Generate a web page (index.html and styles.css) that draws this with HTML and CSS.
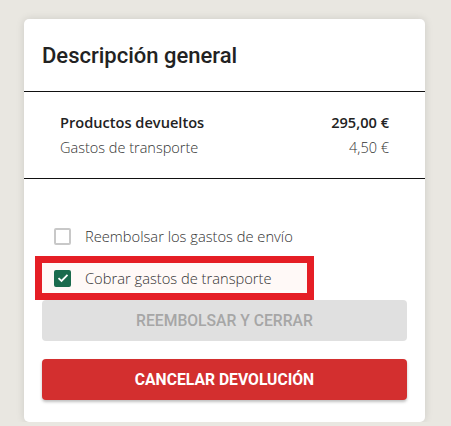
FILE: index.html
```html
<!DOCTYPE html>
<html lang="es">
<head>
    <meta charset="UTF-8">
    <meta name="viewport" content="width=device-width, initial-scale=1.0">
    <title>Descripción general</title>
    <link rel="stylesheet" href="styles.css">
</head>
<body>
    <div class="card">
        <div class="card-header">
            <h2>Descripción general</h2>
        </div>

        <div class="summary">
            <div class="summary-row total">
                <span>Productos devueltos</span>
                <span>295,00 €</span>
            </div>
            <div class="summary-row">
                <span>Gastos de transporte</span>
                <span>4,50 €</span>
            </div>
        </div>

        <div class="actions">
            <label class="check-row">
                <span class="box"></span>
                <span>Reembolsar los gastos de envío</span>
            </label>
            <label class="check-row highlight">
                <span class="box checked">
                    <svg width="12" height="10" viewBox="0 0 12 10"><path d="M1.5 5.2 L4.5 8 L10.5 1.8" fill="none" stroke="#fff" stroke-width="1.8"/></svg>
                </span>
                <span>Cobrar gastos de transporte</span>
            </label>

            <button class="btn btn-disabled" disabled>Reembolsar y cerrar</button>
            <button class="btn btn-danger">Cancelar devolución</button>
        </div>
    </div>
</body>
</html>
```

FILE: styles.css
```css
body {
    margin: 0;
    padding: 19px 0 0 24px;
    background-color: #e9e7e1;
    font-family: "Open Sans", Arial, sans-serif;
    color: #222;
}

.card {
    width: 401px;
    background-color: #ffffff;
    border-radius: 5px;
    box-shadow: 0 0 8px rgba(0, 0, 0, 0.12);
}

.card-header {
    height: 72px;
    padding: 0 18px;
    border-bottom: 1px solid #111;
    display: flex;
    align-items: center;
}

h2 {
    margin: 0;
    font-family: Roboto, sans-serif;
    font-weight: 500;
    font-size: 22px;
    color: #222;
}

.summary {
    height: 86px;
    padding: 0 36px;
    border-bottom: 1px solid #111;
    display: flex;
    flex-direction: column;
    justify-content: center;
    gap: 4px;
}

.summary-row {
    display: flex;
    justify-content: space-between;
    font-size: 14.5px;
    font-weight: 300;
    line-height: 21px;
    color: #333;
}

.summary-row.total {
    font-size: 14.6px;
    font-weight: 600;
    color: #222;
}

.actions {
    padding: 42px 18px 22px;
}

.check-row {
    width: 265px;
    height: 30px;
    padding-left: 12px;
    box-sizing: border-box;
    display: flex;
    align-items: center;
    gap: 14px;
    font-size: 14.7px;
    font-weight: 300;
    color: #333;
}

.check-row + .check-row {
    margin-top: 12px;
}

.check-row.highlight {
    background-color: #fff9f7;
    outline: 7px solid #e51e25;
}

.box {
    width: 17px;
    height: 17px;
    box-sizing: border-box;
    border: 2px solid #c8c8c8;
    border-radius: 2px;
    display: flex;
    align-items: center;
    justify-content: center;
}

.box.checked {
    background-color: #1b6b4d;
    border-color: #1b6b4d;
}

.btn {
    display: block;
    width: 100%;
    height: 41px;
    border: none;
    border-radius: 4px;
    font-family: Roboto, sans-serif;
    font-size: 15.7px;
    font-weight: 500;
    text-transform: uppercase;
}

.btn-disabled {
    margin-top: 7px;
    background-color: #e0e0e0;
    color: #a6a6a6;
}

.btn-danger {
    margin-top: 18px;
    background-color: #d32f2f;
    color: #fff;
    font-weight: 700;
    box-shadow: 0 2px 3px rgba(0, 0, 0, 0.25);
    cursor: pointer;
}
```
